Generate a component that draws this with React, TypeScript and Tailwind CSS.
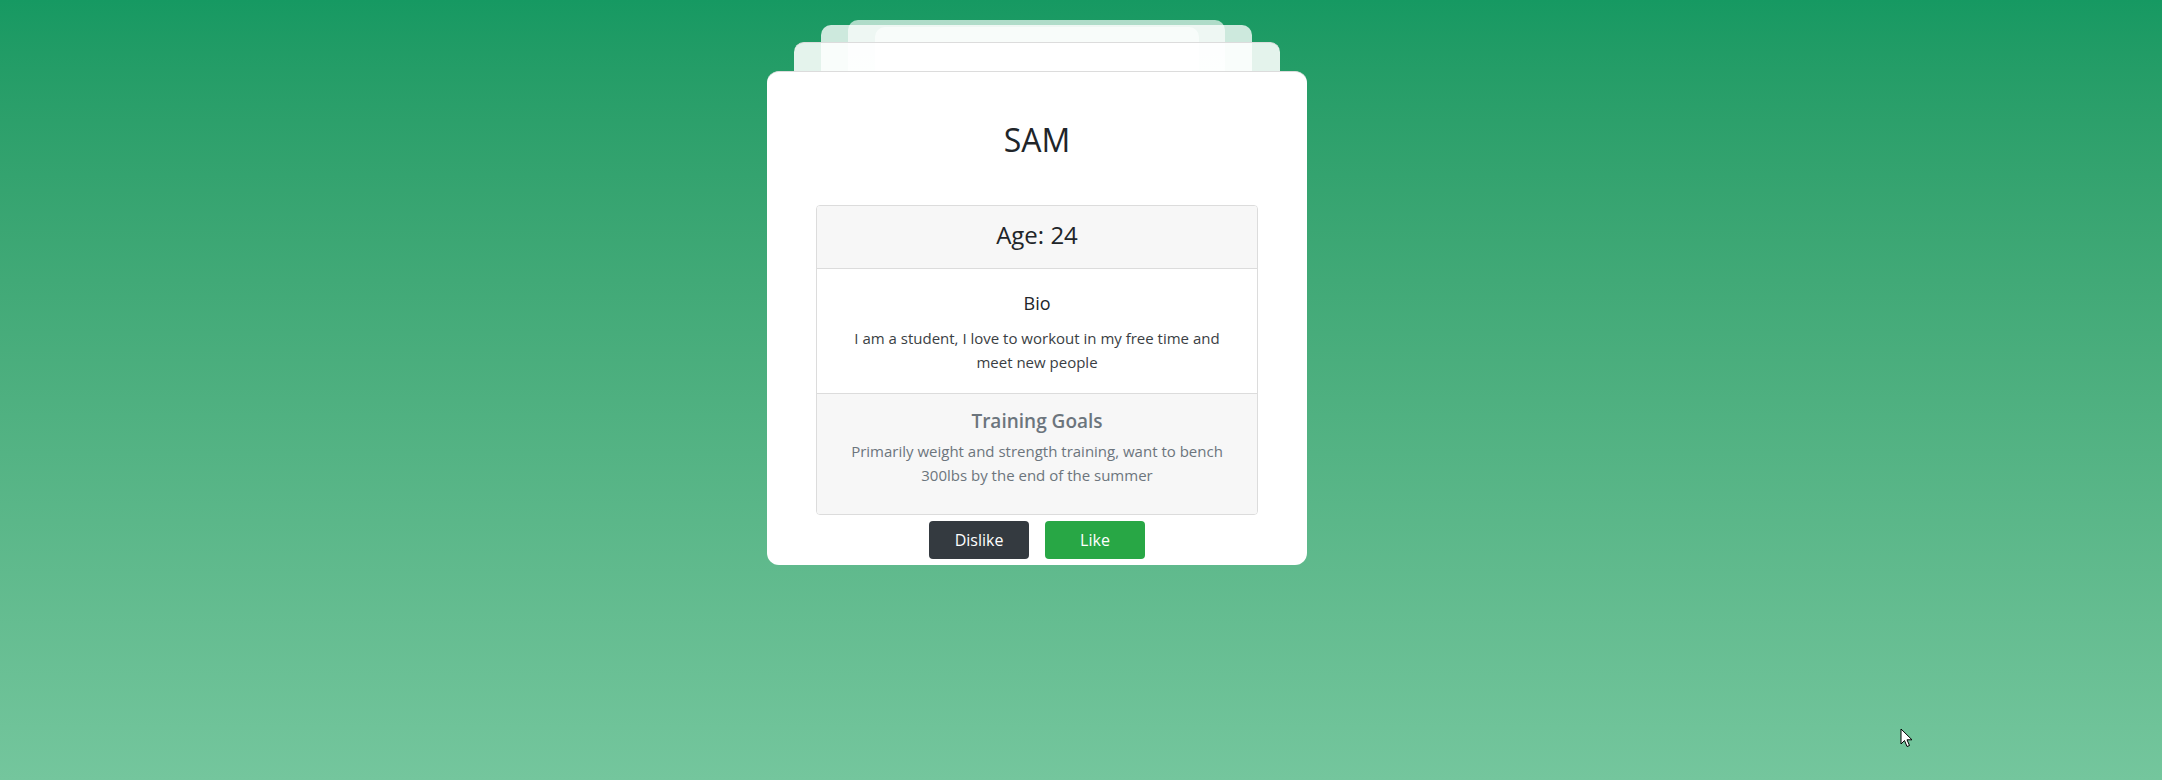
const FONT = "font-['Open_Sans','Noto_Sans',sans-serif]";

function StackLayers() {
  // faded cards peeking out behind the current profile
  return (
    <>
      <div className="absolute left-[108px] top-[-44px] h-[80px] w-[324px] rounded-[10px] bg-white/60" />
      <div className="absolute left-[81px] top-[-51px] h-[80px] w-[377px] rounded-[10px] bg-white/65" />
      <div className="absolute left-[54px] top-[-46px] h-[80px] w-[431px] rounded-[10px] bg-white/78" />
      <div className="absolute left-[27px] top-[-29px] h-[80px] w-[486px] overflow-hidden rounded-[10px] border-t border-[#dcdcdc] bg-white/88">
        <div className="pt-[10px] text-center text-[32px] leading-[38px] text-black/[0.025]">UDHSOYDOY00</div>
      </div>
    </>
  );
}

function Section({ title, text, muted }: { title: string; text: string; muted?: boolean }) {
  return (
    <div
      className={
        muted
          ? "border-t border-[#dcdcdc] bg-[#f7f7f7] px-5 pt-[13px] pb-[27px] text-center text-[#6c757d]"
          : "border-t border-[#dcdcdc] bg-white px-5 pt-[21px] pb-[19px] text-center text-[#212529]"
      }
    >
      <div className={muted ? "text-[19px] leading-[28px] font-semibold" : "text-[18px] leading-[26px] font-medium"}>
        {title}
      </div>
      <p className={muted ? "mt-[4px] text-[15px] leading-[24px]" : "mt-[10px] text-[15px] leading-[24px] text-[#3a3e43]"}>
        {text}
      </p>
    </div>
  );
}

export default function App() {
  return (
    <div className={`${FONT} relative h-[780px] w-full overflow-hidden bg-gradient-to-b from-[#169962] to-[#74c69d]`}>
      <div className="flex justify-center pt-[71px] pr-[88px]">
        <div className="relative w-[540px]">
          <StackLayers />
          <div className="relative rounded-[12px] border-t border-[#dcdcdc] bg-white pb-[6px]">
            <h1 className="pt-[49px] text-center text-[32px] leading-[38px] font-normal text-[#212529]">SAM</h1>
            <div className="mx-auto mt-[46px] w-[442px] overflow-hidden rounded-[4px] border border-[#dcdcdc]">
              <div className="bg-[#f7f7f7] pt-[12px] pb-[16px] text-center text-[24px] leading-[34px] font-medium text-[#212529]">
                Age: 24
              </div>
              <Section
                title="Bio"
                text="I am a student, I love to workout in my free time and meet new people"
              />
              <Section
                muted
                title="Training Goals"
                text="Primarily weight and strength training, want to bench 300lbs by the end of the summer"
              />
            </div>
            <div className="mt-[6px] flex justify-center gap-4">
              <button className="h-[38px] w-[100px] rounded-[4px] bg-[#343a40] text-[16px] text-white">Dislike</button>
              <button className="h-[38px] w-[100px] rounded-[4px] bg-[#28a745] text-[16px] text-white">Like</button>
            </div>
          </div>
        </div>
      </div>
      <svg className="absolute left-[1900px] top-[728px]" width="13" height="21" viewBox="0 0 13 21">
        <path d="M1 1 L1 16 L4.5 12.5 L7 18.5 L9.5 17.5 L7 11.8 L12 11.8 Z" fill="#fff" stroke="#000" strokeWidth="1" strokeLinejoin="round" />
      </svg>
    </div>
  );
}
